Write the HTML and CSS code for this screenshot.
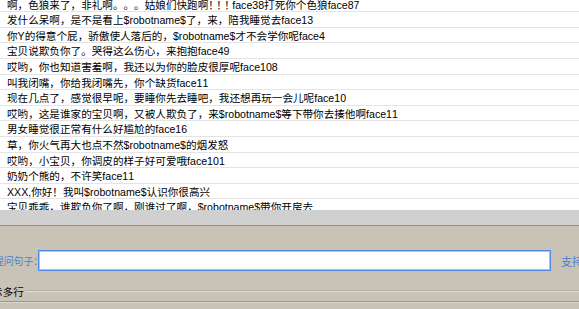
FILE: index.html
```html
<!DOCTYPE html>
<html lang="zh-CN">
<head>
<meta charset="utf-8">
<link rel="stylesheet" href="styles.css">
</head>
<body>
<div class="page">
  <div class="list">
    <div class="rows">
      <div class="row">啊，色狼来了，非礼啊。。。姑娘们快跑啊<span class="tight">！！！</span>face38打死你个色狼face87</div>
      <div class="row">发什么呆啊，是不是看上$robotname$了，来，陪我睡觉去face13</div>
      <div class="row">你Y的得意个屁，骄傲使人落后的，$robotname$才不会学你呢face4</div>
      <div class="row">宝贝说欺负你了。哭得这么伤心，来抱抱face49</div>
      <div class="row">哎哟，你也知道害羞啊，我还以为你的脸皮很厚呢face108</div>
      <div class="row">叫我闭嘴，你给我闭嘴先，你个缺货face11</div>
      <div class="row">现在几点了，感觉很早呢，要睡你先去睡吧，我还想再玩一会儿呢face10</div>
      <div class="row">哎哟，这是谁家的宝贝啊，又被人欺负了，来$robotname$等下带你去揍他啊face11</div>
      <div class="row">男女睡觉很正常有什么好尴尬的face16</div>
      <div class="row">草，你火气再大也点不然$robotname$的烟发怒</div>
      <div class="row">哎哟，小宝贝，你调皮的样子好可爱哦face101</div>
      <div class="row">奶奶个熊的，不许笑face11</div>
      <div class="row">XXX,你好！我叫$robotname$认识你很高兴</div>
      <div class="row">宝贝乖乖，谁欺负你了啊，刚谁过了啊，$robotname$带你开房去</div>
    </div>
  </div>
  <div class="hbar"></div>
  <div class="panel">
    <div class="ask">
      <span class="lbl">提问句子：</span>
      <input class="field" type="text">
      <span class="more">支持</span>
    </div>
    <div class="group">
      <span class="legend">显示多行</span>
      <span class="rule"></span>
    </div>
    <div class="foot"></div>
  </div>
</div>
</body>
</html>
```
FILE: styles.css
```css
html, body {
  margin: 0;
  padding: 0;
  width: 579px;
  height: 309px;
  overflow: hidden;
  background: #c9c2b7;
}
.page {
  display: flex;
  flex-direction: column;
  width: 579px;
  height: 309px;
  font-family: "Liberation Sans", "Noto Sans CJK SC", sans-serif;
  text-spacing-trim: space-all;
  font-kerning: none;
  font-feature-settings: "chws" 0, "halt" 0, "palt" 0, "kern" 0;
}
.list {
  height: 210px;
  overflow: hidden;
  background: #ffffff;
  flex: none;
}
.rows {
  margin-top: -3.3px;
}
.row {
  box-sizing: content-box;
  height: 12.6px;
  line-height: 12.6px;
  padding-top: 2px;
  border-bottom: 1px solid #e4e4e4;
  padding-left: 7px;
  font-size: 10.6px;
  color: #000;
  white-space: nowrap;
  text-spacing-trim: space-all;
  font-kerning: none;
  font-feature-settings: "chws" 0, "halt" 0, "palt" 0, "kern" 0;
}
.tight {
  letter-spacing: -2.6px;
}
.hbar {
  height: 15px;
  flex: none;
  background: #d0d0d0;
  border-bottom: 1px solid #8e8e8e;
}
.panel {
  flex: 1;
  display: flex;
  flex-direction: column;
  background: #c9c2b7;
}
.ask {
  display: flex;
  align-items: center;
  margin-top: 24px;
  height: 21px;
}
.lbl {
  flex: none;
  width: 44px;
  margin-left: -6px;
  font-size: 9.8px;
  color: #4a80d2;
  white-space: nowrap;
  font-family: "Noto Sans CJK SC", sans-serif;
}
.field {
  flex: none;
  box-sizing: border-box;
  width: 513px;
  height: 21px;
  margin: 0;
  padding: 0;
  background: #fff;
  border: 1px solid #4d89e3;
  box-shadow: inset 0 0 0 1px #a9c6f0;
  outline: none;
}
.more {
  flex: none;
  margin-left: 10px;
  font-size: 11px;
  color: #4a80d2;
  white-space: nowrap;
  font-family: "Noto Sans CJK SC", sans-serif;
}
.group {
  display: flex;
  align-items: center;
  margin-top: 13px;
  height: 14px;
}
.legend {
  flex: none;
  margin-left: -18.5px;
  font-size: 10.6px;
  color: #000;
  white-space: nowrap;
  font-family: "Noto Sans CJK SC", sans-serif;
}
.rule {
  flex: 1;
  height: 0;
  margin-left: 2px;
  border-top: 1px solid #b3ada3;
  border-bottom: 1px solid #e2ddd5;
}
.foot {
  margin-top: 3px;
  height: 0;
  border-top: 1px solid #9a958d;
  border-bottom: 1px solid #dcd7cf;
}
```
